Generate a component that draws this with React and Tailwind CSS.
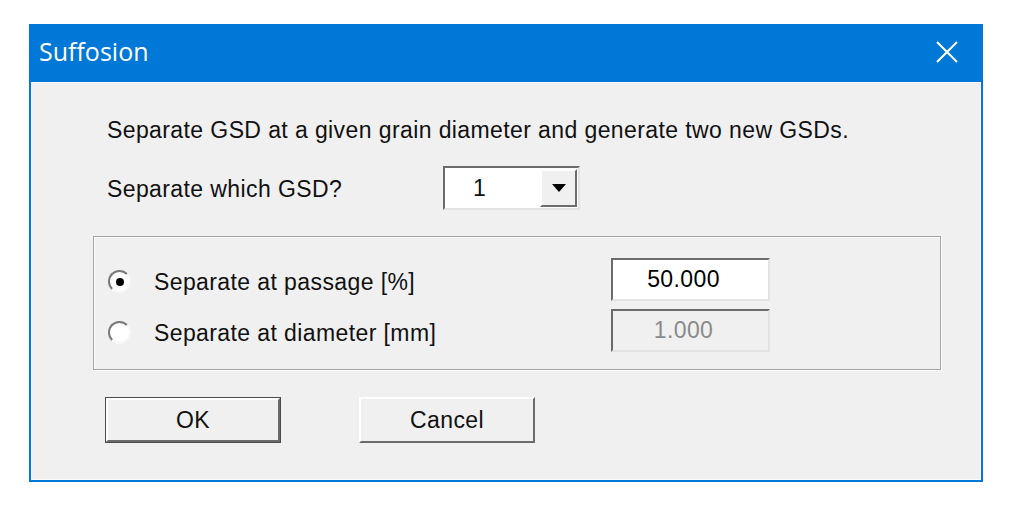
import React from 'react';

const font = { fontFamily: '"Liberation Sans", Arial, sans-serif', letterSpacing: '0.4px' };

const Radio = ({ checked }) => (
    <div className="mt-[4px] w-[23px] h-[23px] rounded-full bg-white border-2 border-t-[#7a7a7a] border-l-[#7a7a7a] border-r-[#f7f7f7] border-b-[#f7f7f7] flex items-center justify-center">
        {checked && <div className="w-[8px] h-[8px] rounded-full bg-black" />}
    </div>
);

const Field = ({ value, disabled }) => (
    <div className={`w-[159px] h-[43px] border-2 border-t-[#6b6b6b] border-l-[#6b6b6b] border-r-[#e3e3e3] border-b-[#e3e3e3] flex items-center justify-center pr-[14px] ${disabled ? 'bg-[#f0f0f0] text-[#8a8a8a]' : 'bg-white text-black'}`}>
        {value}
    </div>
);

const App = () => {
    return (
        <div className="w-[1032px] h-[514px] bg-white pt-[24px] pl-[29px]" style={font}>
            <div className="w-[954px] h-[458px] bg-[#0078d7] flex flex-col px-[2px] pb-[2px]">
                {/* title bar */}
                <div className="h-[58px] flex items-center justify-between pl-[8px] pr-[22px] text-white">
                    <span className="text-[25px] -mt-[3px]" style={{ fontFamily: '"Open Sans", "Noto Sans", sans-serif', letterSpacing: 0 }}>Suffosion</span>
                    <svg width="24" height="24" viewBox="0 0 24 24" className="-mt-[2px]">
                        <path d="M2 2 L22 22 M22 2 L2 22" stroke="white" strokeWidth="2" />
                    </svg>
                </div>

                {/* body */}
                <div className="flex-1 bg-[#f0f0f0] border border-[#fafafa] text-[23px] text-[#111] flex flex-col">
                    <div className="mt-[34px] ml-[75px] leading-[26px]">Separate GSD at a given grain diameter and generate two new GSDs.</div>

                    <div className="mt-[23px] ml-[75px] flex items-center">
                        <span className="w-[336px] leading-[26px] mt-[2px]">Separate which GSD?</span>
                        <div className="w-[137px] h-[44px] border-2 border-t-[#6b6b6b] border-l-[#6b6b6b] border-r-[#e3e3e3] border-b-[#e3e3e3] bg-white flex">
                            <div className="flex-1 flex items-center pl-[28px]">1</div>
                            <div className="w-[37px] mt-[1px] mb-[1px] mr-[1px] bg-[#f0f0f0] border-2 border-t-white border-l-white border-r-[#6b6b6b] border-b-[#6b6b6b] flex items-center justify-center">
                                <svg width="14" height="8" viewBox="0 0 14 8"><path d="M0 0 H14 L7 8 Z" fill="black" /></svg>
                            </div>
                        </div>
                    </div>

                    {/* group box */}
                    <div className="mt-[26px] ml-[61px] w-[848px] h-[134px] border border-[#a3a3a3] shadow-[1px_1px_0_#ffffff,inset_1px_1px_0_#ffffff] flex flex-col pt-[21px] pl-[14px] gap-[8px]">
                        <div className="flex items-center">
                            <Radio checked />
                            <span className="mt-[4px] ml-[23px] w-[457px] leading-[26px]">Separate at passage [%]</span>
                            <Field value="50.000" />
                        </div>
                        <div className="flex items-center">
                            <Radio />
                            <span className="mt-[4px] ml-[23px] w-[457px] leading-[26px]">Separate at diameter [mm]</span>
                            <Field value="1.000" disabled />
                        </div>
                    </div>

                    {/* buttons */}
                    <div className="mt-[27px] ml-[73px] flex gap-[78px]">
                        <button className="w-[176px] h-[46px] border border-[#4a4a4a] bg-[#f0f0f0] text-[23px] text-[#111] flex" style={font}>
                            <div className="flex-1 border-2 border-t-white border-l-white border-r-[#6b6b6b] border-b-[#6b6b6b] flex items-center justify-center">OK</div>
                        </button>
                        <button className="w-[176px] h-[46px] bg-[#f0f0f0] text-[23px] text-[#111] border-2 border-t-white border-l-white border-r-[#6b6b6b] border-b-[#6b6b6b] flex items-center justify-center" style={font}>
                            Cancel
                        </button>
                    </div>
                </div>
            </div>
        </div>
    );
};

export default App;
